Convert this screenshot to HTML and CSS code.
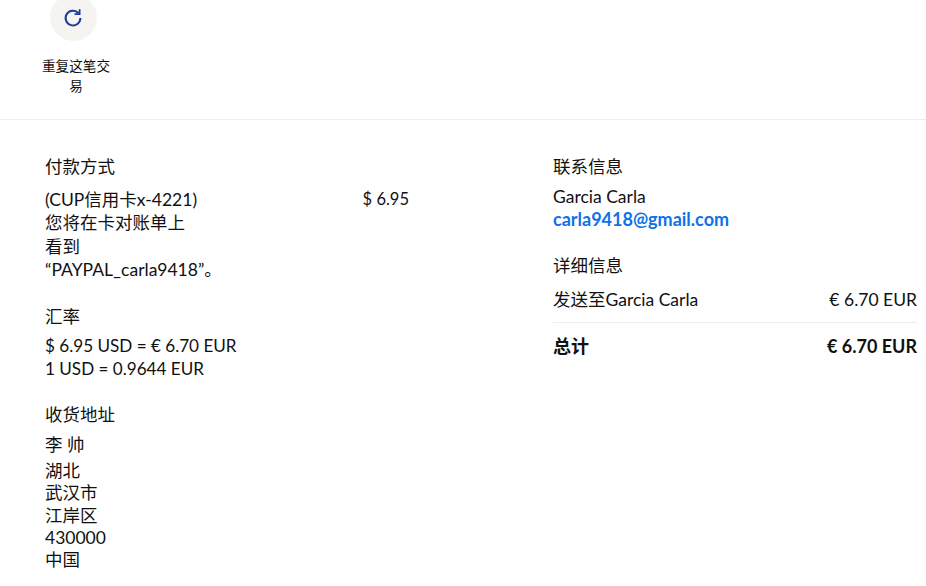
FILE: index.html
```html
<!DOCTYPE html>
<html lang="zh">

<head>
    <meta charset="UTF-8">
    <meta name="viewport" content="width=device-width, initial-scale=1.0">
    <title>交易详情</title>
    <link rel="stylesheet" href="styles.css">
</head>

<body>
    <section class="actions">
        <div class="action">
            <div class="action-circle">
                <svg width="20" height="20" viewBox="0 0 20 20" fill="none" stroke="#1b3a9c" stroke-width="2">
                    <path d="M15.6 5.2A7.4 7.4 0 1 0 17.4 10"/>
                    <path d="M16.6 1.2v5h-5" stroke-width="1.8"/>
                </svg>
            </div>
            <div class="action-label">重复这笔交易</div>
        </div>
    </section>

    <section class="details">
        <div class="col col-left">
            <div class="block block-payment">
                <h3>付款方式</h3>
                <div class="row">
                    <div class="card-text">(CUP信用卡x-4221)<br>您将在卡对账单上<br>看到<br>“PAYPAL_carla9418”。</div>
                    <div class="card-amount">$ 6.95</div>
                </div>
            </div>
            <div class="block block-rate">
                <h3>汇率</h3>
                <div class="amount">$ 6.95 USD = € 6.70 EUR</div>
                <div class="amount">1 USD = 0.9644 EUR</div>
            </div>
            <div class="block address">
                <h3>收货地址</h3>
                <div class="name">李 帅</div>
                <div>湖北</div>
                <div>武汉市</div>
                <div>江岸区</div>
                <div>430000</div>
                <div>中国</div>
            </div>
        </div>
        <div class="col col-right">
            <div class="block block-contact">
                <h3>联系信息</h3>
                <div>Garcia Carla</div>
                <a href="#" class="email">carla9418@gmail.com</a>
            </div>
            <div class="block">
                <h3 class="details-title">详细信息</h3>
                <div class="row line">
                    <div>发送至Garcia Carla</div>
                    <div>€ 6.70 EUR</div>
                </div>
                <div class="row total">
                    <div>总计</div>
                    <div>€ 6.70 EUR</div>
                </div>
            </div>
        </div>
    </section>
</body>

</html>
```

FILE: styles.css
```css
html, body {
    margin: 0;
    padding: 0;
    height: 586px;
    overflow: hidden;
}
body {
    background-color: white;
    color: #111;
    font-family: Lato, "Noto Sans CJK SC", sans-serif;
    font-size: 17.5px;
    line-height: 23px;
}
.actions {
    display: flex;
    height: 119px;
    border-bottom: 1px solid #eeece8;
    padding-left: 38px;
}
.action {
    width: 72px;
    margin-top: -6px;
    text-align: center;
}
.action-circle {
    width: 47px;
    height: 47px;
    margin-left: 11.5px;
    border-radius: 50%;
    background-color: #f5f4f0;
    display: flex;
    align-items: center;
    justify-content: center;
}
.action-label {
    margin: 8px 0 0 4px;
    font-size: 13.6px;
    line-height: 20px;
    padding-top: 7px;
}
.details {
    display: flex;
    padding: 35px 9px 0 45px;
}
.col-left {
    width: 364px;
    margin-right: 144px;
}
.col-right {
    flex: 1;
}
.block {
    margin-bottom: 24px;
}
.block-payment {
    margin-bottom: 23.5px;
}
.block-payment h3 {
    margin-bottom: 8.5px;
}
.block-rate {
    margin-bottom: 23px;
}
.block-rate h3 {
    margin-bottom: 5px;
}
.block-contact {
    margin-bottom: 23px;
}
h3 {
    margin: 0 0 6px 0;
    font-size: 17.5px;
    font-weight: normal;
    line-height: 24px;
}
.details-title {
    margin-bottom: 10px;
}
.row {
    display: flex;
    justify-content: space-between;
}
.card-text {
    white-space: nowrap;
    line-height: 23.5px;
}
.card-amount {
    font-size: 16.5px;
}
.amount {
    font-size: 17.1px;
}
.address div {
    line-height: 22.3px;
}
.address .name {
    line-height: 23px;
    margin-bottom: 4px;
}
.email {
    display: block;
    color: #0d72ea;
    font-size: 18px;
    font-weight: bold;
    text-decoration: none;
}
.line {
    padding-bottom: 11px;
    border-bottom: 1px solid #eeece8;
}
.total {
    padding-top: 12px;
    font-size: 18px;
    font-weight: bold;
}
```
